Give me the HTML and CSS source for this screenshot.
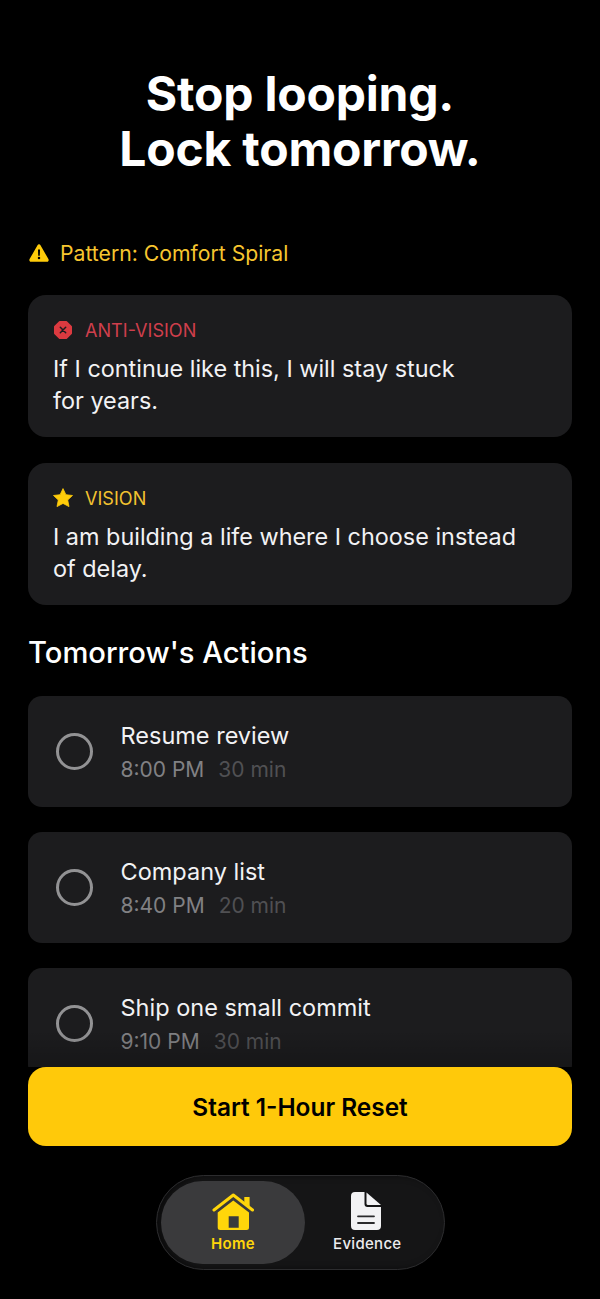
FILE: index.html
```html
<!DOCTYPE html>
<html lang="en">
<head>
    <meta charset="UTF-8">
    <meta name="viewport" content="width=device-width, initial-scale=1.0">
    <title>Stop looping</title>
    <link rel="stylesheet" href="styles.css">
</head>
<body>

    <div class="screen">
        <main class="content">
            <h1>Stop looping.<br>Lock tomorrow.</h1>

            <div class="pattern">
                <svg class="pattern-icon" viewBox="0 0 20 18" width="20" height="18">
                    <path fill="#ffcc0a" fill-rule="evenodd" d="M8.5 1.2a1.7 1.7 0 0 1 3 0l7.9 13.9a1.8 1.8 0 0 1-1.5 2.7H2.1a1.8 1.8 0 0 1-1.5-2.7zM9 5.6l.2 6.2h1.6l.2-6.2zM10 12.800a1.25 1.25 0 1 0 0 2.500 1.25 1.25 0 0 0 0-2.500z"/>
                </svg>
                <span>Pattern: Comfort Spiral</span>
            </div>

            <section class="card">
                <div class="card-label anti">
                    <svg viewBox="0 0 20 20" width="20" height="20">
                        <path fill="#dc3a40" stroke="#dc3a40" stroke-width="2" stroke-linejoin="round" d="M6.800 2h6.400L18 6.800v6.400L13.200 18H6.800L2 13.200V6.800z"/>
                        <path stroke="#1c1c1e" stroke-width="1.500" stroke-linecap="round" d="M7.300 7.300l5.400 5.400M12.700 7.300l-5.400 5.400"/>
                    </svg>
                    <span>ANTI-VISION</span>
                </div>
                <p>If I continue like this, I will stay stuck<br>for years.</p>
            </section>

            <section class="card">
                <div class="card-label vision">
                    <svg viewBox="0 0 20 20" width="20" height="20">
                        <path fill="#ffcc0a" stroke="#ffcc0a" stroke-width="0.800" stroke-linejoin="round" d="M10 .6l2.900 6.100 6.600.8-4.800 4.500 1.300 6.600-6-3.200-6 3.200 1.300-6.600L.5 7.500l6.600-.8z"/>
                    </svg>
                    <span>VISION</span>
                </div>
                <p>I am building a life where I choose instead<br>of delay.</p>
            </section>

            <h2>Tomorrow's Actions</h2>

            <div class="action">
                <div class="circle"></div>
                <div>
                    <div class="action-title">Resume review</div>
                    <div class="action-meta"><span class="time">8:00 PM</span><span class="dur">30 min</span></div>
                </div>
            </div>
            <div class="action">
                <div class="circle"></div>
                <div>
                    <div class="action-title">Company list</div>
                    <div class="action-meta"><span class="time">8:40 PM</span><span class="dur">20 min</span></div>
                </div>
            </div>
            <div class="action">
                <div class="circle"></div>
                <div>
                    <div class="action-title">Ship one small commit</div>
                    <div class="action-meta"><span class="time">9:10 PM</span><span class="dur">30 min</span></div>
                </div>
            </div>
        </main>

        <footer class="bottom">
            <button class="btn">Start 1-Hour Reset</button>
            <nav class="tabs">
                <div class="tab active">
                    <svg viewBox="0 0 42 37" width="42" height="37">
                        <path fill="#ffd60a" fill-rule="evenodd" d="M5.700 19.500L21.300 7.500 37 19.500V34.500a2.500 2.500 0 0 1-2.500 2.500H8.200a2.500 2.500 0 0 1-2.500-2.500zM16.700 23.300v11.400h10V23.300z"/>
                        <path fill="#ffd60a" d="M32.300 4h5.300v9.500l-5.300-4z"/>
                        <path fill="none" stroke="#ffd60a" stroke-width="3" stroke-linecap="round" stroke-linejoin="round" d="M2 17L21.300 2 40.500 17"/>
                    </svg>
                    <span>Home</span>
                </div>
                <div class="tab">
                    <svg class="doc-icon" viewBox="0 0 30 38" width="30" height="38">
                        <path fill="#f2f2f4" d="M4 0h9.500v12a3 3 0 0 0 3 3H30v19a4 4 0 0 1-4 4H4a4 4 0 0 1-4-4V4a4 4 0 0 1 4-4z"/>
                        <path fill="#f2f2f4" d="M15.500.500L30 13H17a1.500 1.500 0 0 1-1.500-1.500z"/>
                        <path stroke="#2a2a2c" stroke-width="1.800" stroke-linecap="round" d="M7 24.300h16M7 31h16"/>
                    </svg>
                    <span>Evidence</span>
                </div>
            </nav>
        </footer>
    </div>

</body>
</html>
```

FILE: styles.css
```css
* {
    box-sizing: border-box;
}

body {
    margin: 0;
    background: #000;
    font-family: 'Inter', 'Liberation Sans', sans-serif;
    color: #fff;
}

.screen {
    position: relative;
    width: 600px;
    height: 1299px;
    overflow: hidden;
}

.content {
    padding: 66px 28px 0;
}

h1 {
    margin: 0;
    font-size: 48px;
    line-height: 55px;
    font-weight: 700;
    text-align: center;
    letter-spacing: -0.2px;
}

.pattern {
    display: flex;
    align-items: center;
    gap: 11px;
    height: 30px;
    margin-top: 62px;
    margin-bottom: 27px;
    padding-left: 1px;
    font-size: 21.2px;
    color: #f7c62f;
}

.card {
    height: 142px;
    margin-bottom: 26px;
    padding: 23px 25px 0;
    background: #1c1c1e;
    border-radius: 18px;
}

.card-label {
    display: flex;
    align-items: center;
    gap: 12px;
    height: 24px;
    font-size: 18.1px;
}

.anti {
    color: #cf3f4c;
}

.vision {
    color: #f2c230;
}

.card p {
    margin: 11px 0 0;
    font-size: 23.4px;
    line-height: 32px;
    color: #f2f2f4;
}

h2 {
    margin: 0 0 24px;
    height: 41px;
    padding-top: 1px;
    font-size: 29.2px;
    line-height: 41px;
    font-weight: 500;
}

.action {
    display: flex;
    align-items: center;
    gap: 28px;
    height: 111px;
    margin-bottom: 25px;
    padding-left: 28px;
    background: #1c1c1e;
    border-radius: 14px;
}

.circle {
    width: 37px;
    height: 37px;
    margin-left: -0.5px;
    border: 3px solid #929294;
    border-radius: 50%;
}

.action-title {
    font-size: 23.5px;
    line-height: 32px;
    color: #f2f2f4;
}

.action-meta {
    margin-top: 4px;
    font-size: 21px;
    line-height: 28px;
}

.time {
    color: #818184;
    margin-right: 14px;
}

.dur {
    color: #505053;
}

.bottom {
    position: absolute;
    left: 0;
    right: 0;
    top: 1030px;
    bottom: 0;
    padding: 37px 28px 0;
    display: flex;
    flex-direction: column;
    align-items: center;
    background: linear-gradient(rgba(0, 0, 0, 0), rgba(0, 0, 0, 0.2) 37px, #000 37px);
}

.btn {
    width: 100%;
    height: 79px;
    flex-shrink: 0;
    padding: 1px 0 0;
    border: none;
    border-radius: 18px;
    background: #ffc90a;
    color: #000;
    font-family: inherit;
    font-size: 24.4px;
    font-weight: 600;
}

.tabs {
    display: flex;
    align-items: center;
    width: 289px;
    height: 95px;
    margin-top: 29px;
    padding: 0 14px 0 4.5px;
    background: #151516;
    border: 1.5px solid #2c2c2e;
    border-radius: 48px;
    box-shadow: inset 4px 0 6px rgba(0, 0, 0, 0.5);
}

.tab {
    display: flex;
    flex: 1;
    flex-direction: column;
    align-items: center;
    justify-content: center;
    gap: 4px;
    height: 83px;
    font-size: 15px;
    font-weight: 500;
    letter-spacing: 0.3px;
    color: #ececee;
}

.tab.active {
    flex: none;
    width: 144px;
    border-radius: 42px;
    background: #3a3a3c;
    color: #ffd60a;
    font-weight: 600;
}

.doc-icon {
    margin-right: 2px;
}
```
